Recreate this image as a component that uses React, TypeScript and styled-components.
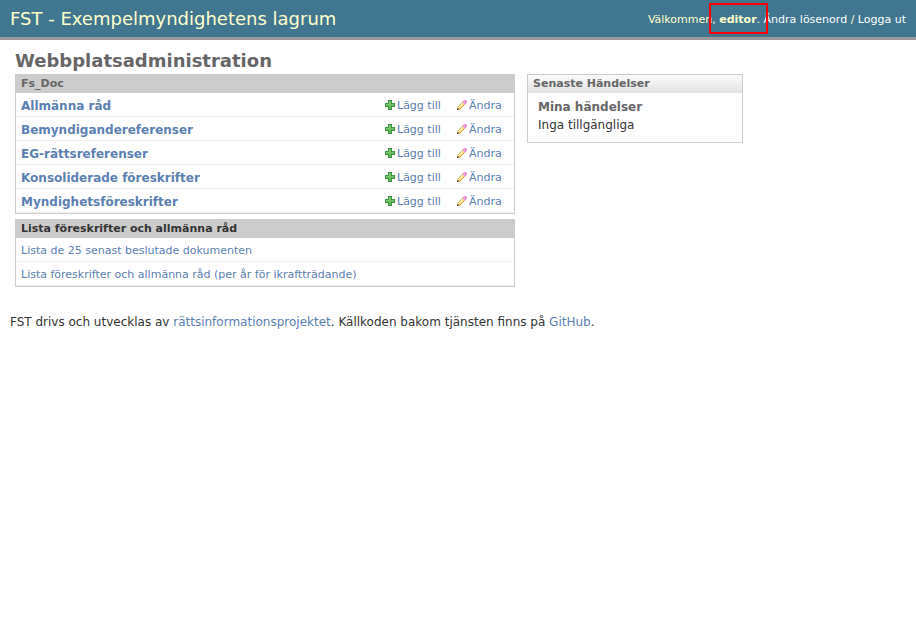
import React from "react";
import styled, { createGlobalStyle } from "styled-components";

const GlobalStyle = createGlobalStyle`
  body {
    margin: 0;
    background: #fff;
    color: #333;
    font: 12px/15px "DejaVu Sans", Verdana, sans-serif;
  }
`;

const Header = styled.header`
  display: flex;
  align-items: center;
  justify-content: space-between;
  height: 37px;
  padding: 0 10px;
  background: #417690;
  color: #ffc;
  border-bottom: 3px solid #999;
`;

const SiteName = styled.h1`
  margin: 0;
  font-size: 18px;
  line-height: 22px;
  font-weight: normal;
`;

const UserTools = styled.div`
  padding-top: 2px;
  font-size: 11px;
  line-height: 14px;
  white-space: nowrap;
`;

const UserName = styled.strong`
  position: relative;
`;

const Marker = styled.span`
  position: absolute;
  inset: -10px -11px -8px -10px;
  border: 2px solid #f00;
  pointer-events: none;
`;

const Link = styled.a`
  color: #5b80b2;
  text-decoration: none;
`;

const HeaderLink = styled(Link)`
  color: #fff;
`;

const Content = styled.main`
  padding: 11px 15px 0;
`;

const PageTitle = styled.h2`
  margin: 0 0 3px;
  font-size: 18px;
  line-height: 20px;
  color: #666;
`;

const Columns = styled.div`
  display: grid;
  grid-template-columns: minmax(0, 500px) 216px;
  align-items: start;
  gap: 12px;
`;

const Modules = styled.div`
  display: flex;
  flex-direction: column;
  gap: 5px;
`;

const Module = styled.section`
  border: 1px solid #ccc;
  border-top: 0;
  background: #fff;
`;

const Table = styled.table`
  width: 100%;
  border-collapse: separate;
  border-spacing: 0;
`;

const Caption = styled.caption<{ $dark?: boolean }>`
  padding: 3px 5px 2px;
  background: #ccc;
  color: ${(p) => (p.$dark ? "#333" : "#666")};
  font-size: 11px;
  line-height: 14px;
  font-weight: bold;
  text-align: left;
`;

const NameCell = styled.th`
  padding: 5px 5px 2px;
  border-bottom: 1px solid #eee;
  text-align: left;
  font-size: 12px;
  line-height: 16px;
`;

const Cell = styled.td<{ $width?: number }>`
  box-sizing: border-box;
  width: ${(p) => (p.$width ? `${p.$width}px` : "auto")};
  padding: 5px 5px 2px;
  border-bottom: 1px solid #eee;
  font-size: 11px;
  line-height: 16px;
  white-space: nowrap;
`;

const ActionLink = styled(Link)`
  display: flex;
  align-items: flex-start;
  gap: 2px;

  svg {
    margin-top: 2px;
  }
`;

const RecentActions = styled.aside`
  border: 1px solid #ccc;
  padding-bottom: 8px;
`;

const RecentTitle = styled.h2`
  margin: 0 0 5px;
  padding: 2px 5px;
  background: linear-gradient(#fbfbfb, #e1e1e1);
  color: #666;
  font-size: 11px;
  line-height: 14px;
`;

const MyActions = styled.h3`
  margin: 0 10px 1px;
  font-size: 12px;
  line-height: 18px;
  color: #666;
`;

const Empty = styled.p`
  margin: 0 10px;
  line-height: 17px;
`;

const Footer = styled.footer`
  padding: 28px 10px;
`;

const AddIcon = () => (
  <svg width="10" height="10" viewBox="0 0 10 10" aria-hidden="true">
    <path d="M3 0h4v3h3v4H7v3H3V7H0V3h3z" fill="#3f9440" />
    <path d="M4 1h2v3h3v2H6v3H4V6H1V4h3z" fill="#65bd60" />
    <path d="M4 1h1v4H1V4h3z" fill="#7fcd79" />
  </svg>
);

const ChangeIcon = () => (
  <svg width="10" height="10" viewBox="0 0 10 10" aria-hidden="true">
    <path d="M0 10V7.5L6 1.5 8.5 4l-6 6z" fill="#c9a052" />
    <path d="M1 7.6L6 2.6 7.4 4 2.4 9z" fill="#ffe278" />
    <path d="M1.5 7.7L6.2 3" stroke="#fff6bd" strokeWidth="1" />
    <path d="M5.5 2L7.5 0H9l1 1v1.5l-2 2z" fill="#e58bd5" />
    <path d="M6.7 2L8 .8l1.2 1.2L8 3.2z" fill="#ff9bea" />
    <path d="M0 10V8.2L1.8 10z" fill="#32271f" />
  </svg>
);

const models = [
  "Allmänna råd",
  "Bemyndigandereferenser",
  "EG-rättsreferenser",
  "Konsoliderade föreskrifter",
  "Myndighetsföreskrifter",
];

const lists = [
  "Lista de 25 senast beslutade dokumenten",
  "Lista föreskrifter och allmänna råd (per år för ikraftträdande)",
];

export default function App() {
  return (
    <>
      <GlobalStyle />
      <Header>
        <SiteName>FST - Exempelmyndighetens lagrum</SiteName>
        <UserTools>
          Välkommen,{" "}
          <UserName>
            editor
            <Marker />
          </UserName>
          . <HeaderLink href="#password">Ändra lösenord</HeaderLink> /{" "}
          <HeaderLink href="#logout">Logga ut</HeaderLink>
        </UserTools>
      </Header>
      <Content>
        <PageTitle>Webbplatsadministration</PageTitle>
        <Columns>
          <Modules>
            <Module>
              <Table>
                <Caption>Fs_Doc</Caption>
                <tbody>
                  {models.map((name) => (
                    <tr key={name}>
                      <NameCell scope="row">
                        <Link href="#model">{name}</Link>
                      </NameCell>
                      <Cell $width={72}>
                        <ActionLink href="#add">
                          <AddIcon />
                          Lägg till
                        </ActionLink>
                      </Cell>
                      <Cell $width={62}>
                        <ActionLink href="#change">
                          <ChangeIcon />
                          Ändra
                        </ActionLink>
                      </Cell>
                    </tr>
                  ))}
                </tbody>
              </Table>
            </Module>
            <Module>
              <Table>
                <Caption $dark>Lista föreskrifter och allmänna råd</Caption>
                <tbody>
                  {lists.map((name) => (
                    <tr key={name}>
                      <Cell>
                        <Link href="#list">{name}</Link>
                      </Cell>
                    </tr>
                  ))}
                </tbody>
              </Table>
            </Module>
          </Modules>
          <RecentActions>
            <RecentTitle>Senaste Händelser</RecentTitle>
            <MyActions>Mina händelser</MyActions>
            <Empty>Inga tillgängliga</Empty>
          </RecentActions>
        </Columns>
      </Content>
      <Footer>
        FST drivs och utvecklas av <Link href="#project">rättsinformationsprojektet</Link>. Källkoden
        bakom tjänsten finns på <Link href="#github">GitHub</Link>.
      </Footer>
    </>
  );
}
